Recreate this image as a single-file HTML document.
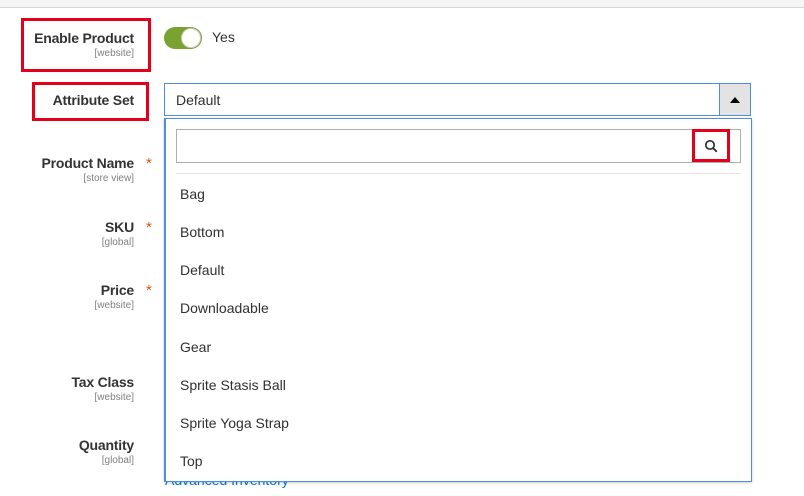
<!DOCTYPE html>
<html><head><style>
*{margin:0;padding:0;box-sizing:border-box}
body{width:804px;height:496px;background:#fff;position:relative;overflow:hidden;font-family:"Liberation Sans",sans-serif;color:#303030}
.a{position:absolute;white-space:nowrap}
.lbl{position:absolute;right:670px;text-align:right;font-size:14px;font-weight:bold;color:#333;letter-spacing:-0.2px}
.sc{position:absolute;right:670px;text-align:right;font-size:10px;color:#808080}
.ast{position:absolute;left:146px;color:#eb5202;font-size:15px}
.red{position:absolute;border:3px solid #e2001a}
.it{position:absolute;left:180px;font-size:14px;color:#303030}
</style></head><body>
<div class="a" style="left:0;top:0;width:804px;height:8px;background:#f5f5f5;border-bottom:1px solid #d6d6d6"></div>

<div class="red" style="left:21px;top:18px;width:130px;height:54px"></div>
<div class="lbl" style="top:30px">Enable Product</div>
<div class="sc" style="top:48px">[website]</div>
<div class="a" style="left:164px;top:27px;width:38px;height:22px;border-radius:11px;background:#79a22e"></div>
<div class="a" style="left:181px;top:28px;width:20px;height:20px;border-radius:10px;background:#fff;border:1px solid #ccc"></div>
<div class="a" style="left:212px;top:29px;font-size:14px">Yes</div>

<div class="red" style="left:32px;top:82px;width:117px;height:39px"></div>
<div class="lbl" style="top:92px">Attribute Set</div>
<div class="a" style="left:164px;top:83px;width:587px;height:33px;border:1px solid #4e8fd8;background:#fff"></div>
<div class="a" style="left:176px;top:92px;font-size:14px">Default</div>
<div class="a" style="left:719px;top:84px;width:31px;height:31px;background:#e3e3e3;border-left:1px solid #4e8fd8"></div>
<div class="a" style="left:730px;top:97px;width:0;height:0;border-left:5px solid transparent;border-right:5px solid transparent;border-bottom:6px solid #000"></div>

<div class="lbl" style="top:155px">Product Name</div><div class="ast" style="top:155px">*</div>
<div class="sc" style="top:173px">[store view]</div>
<div class="lbl" style="top:219px">SKU</div><div class="ast" style="top:219px">*</div>
<div class="sc" style="top:237px">[global]</div>
<div class="lbl" style="top:282px">Price</div><div class="ast" style="top:282px">*</div>
<div class="sc" style="top:300px">[website]</div>
<div class="lbl" style="top:374px">Tax Class</div>
<div class="sc" style="top:392px">[website]</div>
<div class="lbl" style="top:437px">Quantity</div>
<div class="sc" style="top:455px">[global]</div>
<div class="a" style="left:165px;top:472px;font-size:14px;color:#007bdb">Advanced Inventory</div>

<div class="a" style="left:164px;top:118px;width:588px;height:364px;border:1px solid #4e8fd8;border-left-width:2px;background:#fff;box-shadow:0 1px 3px rgba(0,0,0,.2)"></div>
<div class="a" style="left:176px;top:129px;width:565px;height:34px;border:1px solid #adadad;background:#fff"></div>
<div class="red" style="left:692px;top:129px;width:38px;height:33px"></div>
<svg class="a" style="left:704px;top:139px" width="14" height="14" viewBox="0 0 14 14"><circle cx="6" cy="6" r="4.2" fill="none" stroke="#303030" stroke-width="1.7"/><path d="M9.2 9.2l3 3" stroke="#303030" stroke-width="1.9" stroke-linecap="round"/></svg>
<div class="a" style="left:176px;top:173px;width:565px;height:1px;background:#e3e3e3"></div>
<div class="it" style="top:186px">Bag</div>
<div class="it" style="top:224px">Bottom</div>
<div class="it" style="top:262px">Default</div>
<div class="it" style="top:300px">Downloadable</div>
<div class="it" style="top:339px">Gear</div>
<div class="it" style="top:377px">Sprite Stasis Ball</div>
<div class="it" style="top:415px">Sprite Yoga Strap</div>
<div class="it" style="top:453px">Top</div>
</body></html>
